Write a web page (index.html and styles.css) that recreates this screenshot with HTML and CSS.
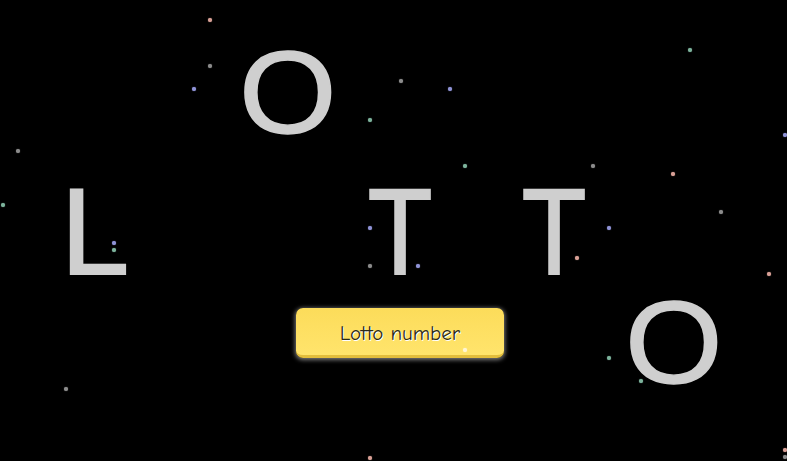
FILE: index.html
```html
<!DOCTYPE html>
<html>
<head>
<meta charset="utf-8">
<title>Lotto</title>
<link rel="stylesheet" href="styles.css">
</head>
<body>
<main class="scene">
  <div class="word">
    <span class="letter l1">L</span>
    <span class="letter l2 round">O</span>
    <span class="letter l3 narrow">T</span>
    <span class="letter l4 narrow">T</span>
    <span class="letter l5 round">O</span>
  </div>
  <div class="actions">
    <button class="lotto-btn">Lotto number</button>
  </div>
  <div class="stars">
    <i class="star pink" style="left:208px;top:18px"></i>
    <i class="star gray" style="left:208px;top:64px"></i>
    <i class="star blue" style="left:192px;top:87px"></i>
    <i class="star gray" style="left:399px;top:79px"></i>
    <i class="star blue" style="left:448px;top:87px"></i>
    <i class="star green" style="left:368px;top:118px"></i>
    <i class="star green" style="left:688px;top:48px"></i>
    <i class="star gray" style="left:16px;top:149px"></i>
    <i class="star blue" style="left:783px;top:133px"></i>
    <i class="star green" style="left:463px;top:164px"></i>
    <i class="star gray" style="left:591px;top:164px"></i>
    <i class="star pink" style="left:671px;top:172px"></i>
    <i class="star green" style="left:1px;top:203px"></i>
    <i class="star gray" style="left:719px;top:210px"></i>
    <i class="star blue" style="left:112px;top:241px"></i>
    <i class="star green" style="left:112px;top:248px"></i>
    <i class="star blue" style="left:368px;top:226px"></i>
    <i class="star blue" style="left:607px;top:226px"></i>
    <i class="star pink" style="left:575px;top:256px"></i>
    <i class="star gray" style="left:368px;top:264px"></i>
    <i class="star blue" style="left:416px;top:264px"></i>
    <i class="star pink" style="left:767px;top:272px"></i>
    <i class="star white" style="left:463px;top:348px"></i>
    <i class="star green" style="left:607px;top:356px"></i>
    <i class="star green" style="left:639px;top:379px"></i>
    <i class="star gray" style="left:64px;top:387px"></i>
    <i class="star pink" style="left:368px;top:456px"></i>
    <i class="star pink" style="left:783px;top:448px"></i>
    <i class="star gray" style="left:783px;top:455px"></i>
  </div>
</main>
</body>
</html>
```
FILE: styles.css
```css
html, body {
  margin: 0;
  padding: 0;
  background: #000;
  width: 787px;
  height: 461px;
  overflow: hidden;
}

.scene {
  position: relative;
  width: 787px;
  height: 461px;
  background: #000;
}

.word {
  display: flex;
  align-items: flex-start;
  height: 308px;
}

.letter {
  display: block;
  width: 90px;
  text-align: center;
  font-family: "Liberation Sans", Arial, sans-serif;
  font-size: 123px;
  line-height: 1;
  color: #cfcfcf;
  -webkit-text-stroke: 2px #cfcfcf;
}

.narrow { transform: scaleX(0.86); }
.round {
  transform: scale(1.02, 0.955);
  transform-origin: 50% 15px;
  -webkit-text-stroke: 1.5px #cfcfcf;
}

.l1 { margin-left: 50px; margin-top: 170px; }
.l2 { margin-left: 100px; margin-top: 33px; }
.l3 { margin-left: 25px; margin-top: 170px; }
.l4 { margin-left: 64px; margin-top: 170px; }
.l5 { margin-left: 27px; margin-top: 283px; }

.actions {
  display: flex;
  padding-left: 296px;
}

.lotto-btn {
  width: 208px;
  height: 50px;
  box-sizing: border-box;
  border: none;
  border-bottom: 3px solid #e2bd3c;
  border-radius: 7px;
  background: linear-gradient(#fcdc5a, #ffe46c);
  box-shadow: 0 1px 4px 1px rgba(200, 200, 200, 0.6);
  font-family: "Comic Sans MS", "Comic Neue", "Open Sans", sans-serif;
  font-size: 21px;
  color: #2a2a1a;
  text-shadow: 1px 1px 0 #fff;
  padding: 2px 0 0;
  cursor: pointer;
}

.stars {
  position: absolute;
  inset: 0;
  pointer-events: none;
}

.star {
  position: absolute;
  width: 4px;
  height: 4px;
  border-radius: 50%;
}

.pink { background: #d9a096; box-shadow: 0 0 1px #d9a096; }
.blue { background: #8f93d6; box-shadow: 0 0 1px #8f93d6; }
.green { background: #7db39c; box-shadow: 0 0 1px #7db39c; }
.gray { background: #8c8c8c; box-shadow: 0 0 1px #8c8c8c; }
.white { background: #fff6d6; box-shadow: 0 0 1px #fff6d6; }
```
